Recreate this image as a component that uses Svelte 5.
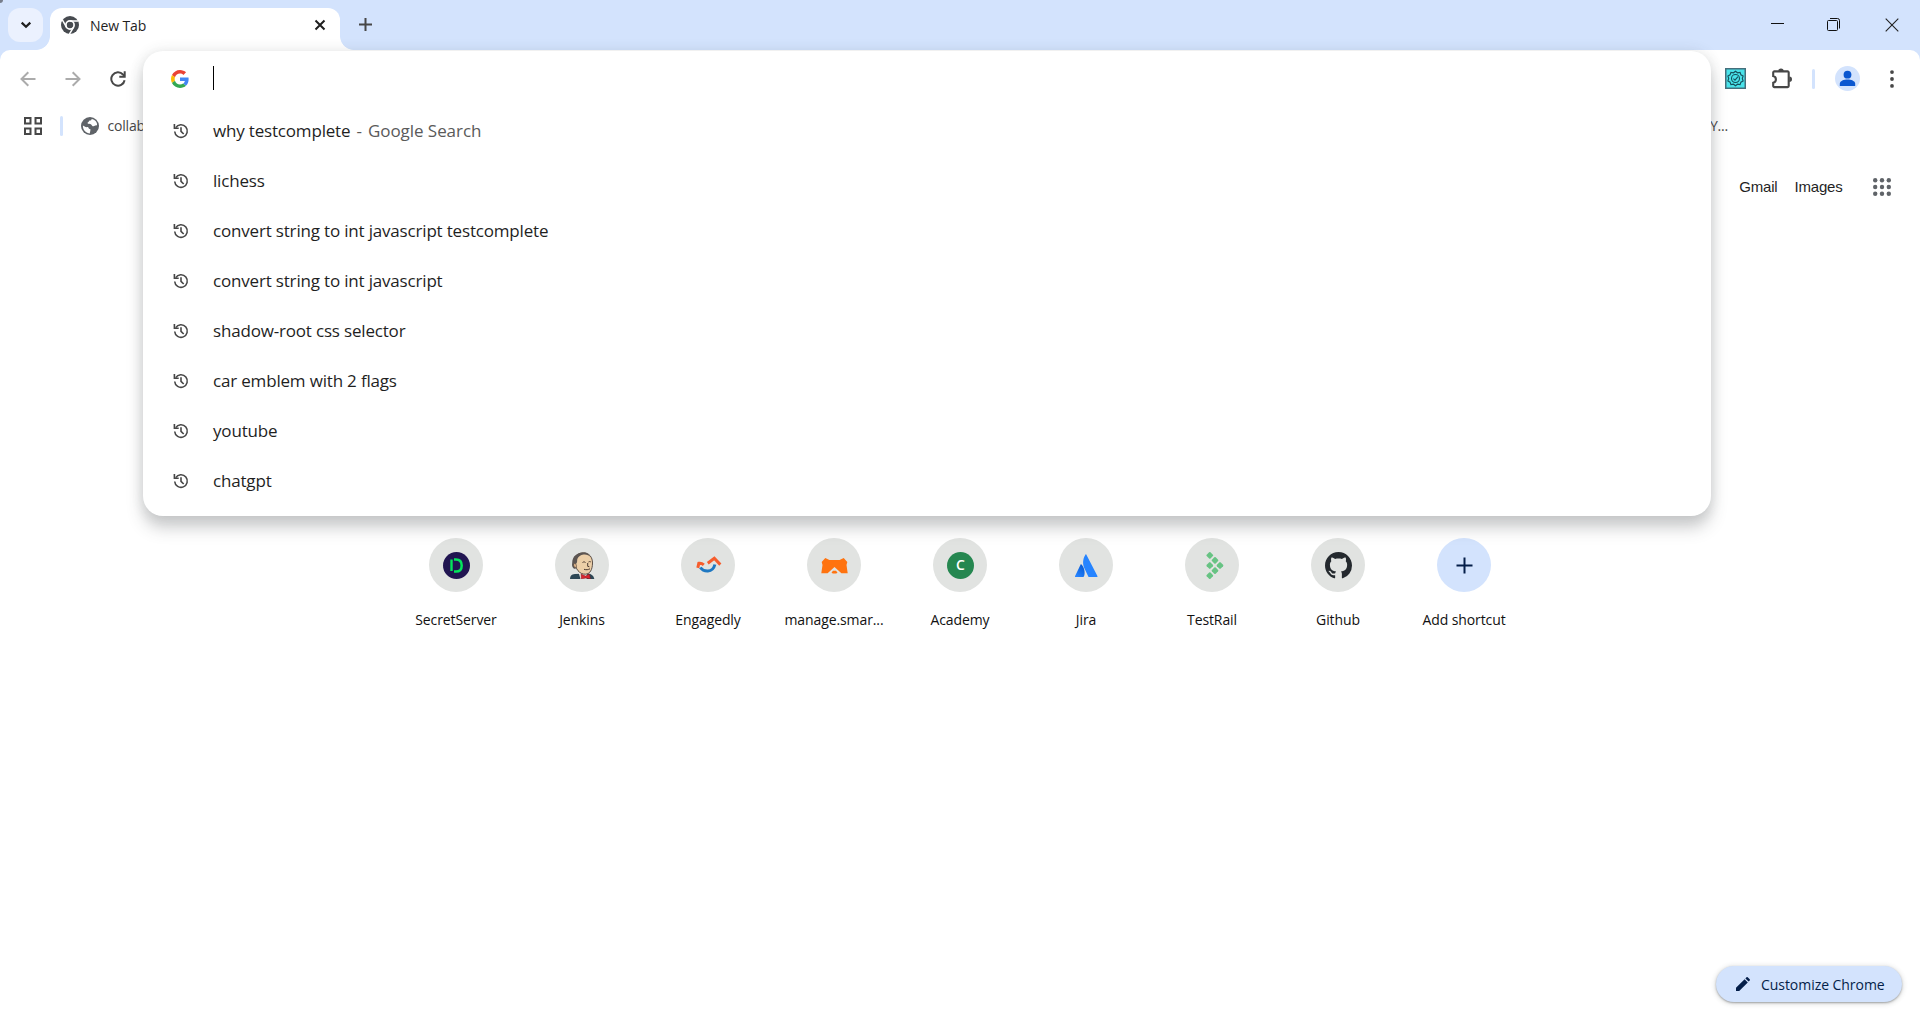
<script>
  const searches = [
    { text: 'why testcomplete', note: 'Google Search' },
    { text: 'lichess' },
    { text: 'convert string to int javascript testcomplete' },
    { text: 'convert string to int javascript' },
    { text: 'shadow-root css selector' },
    { text: 'car emblem with 2 flags' },
    { text: 'youtube' },
    { text: 'chatgpt' }
  ];

  const shortcuts = [
    { label: 'SecretServer', icon: 'secret' },
    { label: 'Jenkins', icon: 'jenkins' },
    { label: 'Engagedly', icon: 'engagedly' },
    { label: 'manage.smar...', icon: 'smartbear' },
    { label: 'Academy', icon: 'academy' },
    { label: 'Jira', icon: 'jira' },
    { label: 'TestRail', icon: 'testrail' },
    { label: 'Github', icon: 'github' },
    { label: 'Add shortcut', icon: 'add' }
  ];
</script>

<div class="browser">
  <header class="strip">
    <button class="tab-search" aria-label="Search tabs">
      <svg width="12" height="8" viewBox="0 0 12 8"><path d="M1.7 1.6 6 5.8l4.3-4.2" fill="none" stroke="#1f1f1f" stroke-width="2.2" /></svg>
    </button>
    <div class="tab">
      <svg class="chrome" width="18" height="18" viewBox="0 0 18 18">
        <circle cx="9" cy="9" r="9" fill="#474b50" />
        <circle cx="9" cy="9" r="4.1" fill="none" stroke="#fff" stroke-width="1.7" />
        <path d="M9 4.9h8.200M5.450 11.050 1.350 3.950M12.550 11.050l-4.100 7.100" fill="none" stroke="#fff" stroke-width="1.500" />
      </svg>
      <span class="tab-title">New Tab</span>
      <svg class="close" width="12" height="12" viewBox="0 0 12 12"><path d="m1.5 1.5 9 9m0-9-9 9" stroke="#1f1f1f" stroke-width="2" /></svg>
    </div>
    <svg class="new-tab" width="13" height="13" viewBox="0 0 13 13"><path d="M6.5 0v13M0 6.5h13" stroke="#474747" stroke-width="2" /></svg>
    <div class="window-controls">
      <svg width="13" height="13" viewBox="0 0 13 13"><path d="M0 5.5h13" stroke="#111" /></svg>
      <svg width="14" height="14" viewBox="0 0 14 14" fill="none" stroke="#111"><rect x=".5" y="2.500" width="10" height="10" rx="1" /><path d="M3 .5h7.500a2 2 0 0 1 2 2v8" /></svg>
      <svg width="14" height="14" viewBox="0 0 14 14"><path d="m.7.7 12.6 12.6m0-12.6L.7 13.3" stroke="#222" stroke-width="1.1" /></svg>
    </div>
  </header>

  <div class="frame">
    <div class="toolbar">
      <svg width="16" height="16" viewBox="0 0 16 16" class="nav"><path d="M15.5 8H2M8.3 1.2 1.5 8l6.8 6.8" /></svg>
      <svg width="16" height="16" viewBox="0 0 16 16" class="nav"><path d="M.5 8H14M7.7 1.2 14.5 8l-6.8 6.8" /></svg>
      <svg width="16" height="16" viewBox="0 0 16 16" class="reload"><path d="M14.6 9.2A6.7 6.7 0 1 1 13 3.5L14.6 5" /><path d="M14.700 .3v5.400H9.300" /></svg>
      <div class="actions">
        <svg class="badge" width="21" height="21" viewBox="0 0 21 21">
          <rect x=".75" y=".75" width="19.5" height="19.5" fill="#49e3ea" stroke="#456f7c" stroke-width="1.5" />
          <g fill="none" stroke="#16505c" stroke-width="1.1">
            <path d="m10.5 3.3 2 1.5 2.6-.4.8 2.4 2.2 1.3-.8 2.4.8 2.4-2.2 1.3-.8 2.4-2.6-.4-2 1.5-2-1.5-2.6.4-.8-2.4-2.2-1.3.8-2.4-.8-2.4 2.2-1.3.8-2.4 2.6.4z" />
            <circle cx="10.5" cy="10.5" r="4" />
            <path d="m8.4 10.6 1.6 1.5 3-3.4" />
          </g>
        </svg>
        <svg class="puzzle" width="22" height="21" viewBox="0 0 22 21">
          <path d="M3.400 3.400h13.200a1.100 1.100 0 0 1 1.100 1.100v13.500a1.100 1.100 0 0 1-1.100 1.100H3.400A1.100 1.100 0 0 1 2.200 18v-3.200c3.600-1 3.600-5.700 0-6.700V4.500a1.100 1.100 0 0 1 1.200-1.100z" fill="none" stroke="#474747" stroke-width="2.100" />
          <path d="M7.300 3.200a2.700 2.700 0 0 1 5.400 0zM18.300 8.600a2.700 2.700 0 0 1 0 5.400z" fill="#474747" />
        </svg>
        <i class="rule"></i>
        <svg class="avatar" width="25" height="25" viewBox="0 0 25 25"><circle cx="12.5" cy="12.5" r="12.5" fill="#d3e3fd" /><circle cx="12.5" cy="8.7" r="3.9" fill="#0b57d0" /><path d="M4.8 20v-2.2c0-2.8 4.2-4.2 7.7-4.2s7.7 1.4 7.7 4.2V20z" fill="#0b57d0" /></svg>
        <svg width="4" height="18" viewBox="0 0 4 18" fill="#474747"><circle cx="2" cy="2.1" r="1.9" /><circle cx="2" cy="9" r="1.9" /><circle cx="2" cy="15.9" r="1.9" /></svg>
      </div>
    </div>

    <div class="bookmarks">
      <svg width="18" height="18" viewBox="0 0 18 18" fill="none" stroke="#474747" stroke-width="2"><path d="M1 1h5.500v5.500H1zM11.500 1H17v5.500h-5.500zM1 11.500h5.500V17H1zM11.500 11.500H17V17h-5.500z" /></svg>
      <i class="rule"></i>
      <svg class="globe" width="18" height="18" viewBox="0 0 18 18"><circle cx="9" cy="9" r="9" fill="#5f6368" /><path d="M1.900 8.600c1.300.9 2.600 1.700 4.400 1.500 1.600-.1 1 1.900 2.500 2 1.300.1.400 1.600.4 2.500-.1 1-.6 1.300-.1 1.900C5 16.500 1.600 13 1.900 8.600zM10.500 2.100c.3 1.200-.7 1.500-1.800 1.500-.8 0-.6 1.400-1.600 1.700-.8.3-.7 1.300.2 1.500 1.300.3 2.500-.1 3.100.9.5.9.900 1.500 1.900 1.500 1.300.1 2.200-1.400 3.700-.6.600-3-1.900-6.200-5.500-6.500z" fill="#fff" /></svg>
      <span class="bookmark">collab</span>
      <span class="bookmark tail">Y...</span>
    </div>

    <nav class="links">
      <span>Gmail</span>
      <span>Images</span>
      <svg width="18" height="18" viewBox="0 0 18 18" fill="#5f6368">
        {#each [2.2, 9, 15.8] as cy}
          {#each [2.2, 9, 15.8] as cx}<circle {cx} {cy} r="2.2" />{/each}
        {/each}
      </svg>
    </nav>

    <main class="shortcuts">
      {#each shortcuts as s}
        <div class="tile">
          <div class="disc" class:add={s.icon === 'add'}>
            <svg width="27" height="27" viewBox="0 0 27 27">
              {#if s.icon === 'secret'}
                <circle cx="13.5" cy="13.5" r="13.5" fill="#211551" />
                <path d="M8.500 7.500v11.500" fill="none" stroke="#05e45c" stroke-width="2.400" />
                <path d="M11 7.400h2c3.700 0 5.700 2.400 5.700 6s-2 6.100-5.700 6.100h-2" fill="none" stroke="#05e45c" stroke-width="2.500" />
              {:else if s.icon === 'jenkins'}
                <path d="M1 27c.3-3.300 1-4.300 5-5l13-.5c3.500.5 5.800 2 6.300 5.500z" fill="#2c4654" />
                <path d="M9.500 20h9l-1 7h-6z" fill="#f4f1e8" />
                <path d="M5.500 9C5.800 3.500 9.500.7 14.500.8c5.700.1 9 4.400 9 10.200 0 6.500-2.500 11-7 11.200C10.500 22.500 6.200 17 5.500 9z" fill="#eccfa8" stroke="#4c4038" stroke-width=".9" />
                <path d="M15 .5C8 .5 3.300 4 3.200 11c-.4 2-.2 4 1.500 5.500L6.500 17l.3-4.500 1.200-2.300L8.300 7c1.200-2.700 3.200-4 6.200-4.500 3-.3 5.500.5 7 2.700C20 2 18 .6 15 .5z" fill="#5c5552" />
                <path d="M4.500 12c1.500-1 2.800 0 3 1.800l-.4 2c-1.800 0-2.700-1.700-2.600-3.800z" fill="#deb58b" stroke="#4c4038" stroke-width=".6" />
                <path d="M13.500 10.500c1-.8 2-.8 3 0M19.500 10c1-.6 1.600-.5 2.400 0M18.700 11v3.300l1.700.5M15 17.300c2.500.8 4 .4 6-.5" fill="none" stroke="#4b3a31" stroke-width="1" />
                <path d="m12 22 4.500 2 3.900-2 1 5-4.300-1-4.800 1z" fill="#d8262e" stroke="#7e2028" stroke-width=".5" />
              {:else if s.icon === 'engagedly'}
                <path d="M5.300 15.500c3.200 4.500 12.300 6 14.600-3" fill="none" stroke="#1e78c2" stroke-width="3" />
                <path d="m2.800 15.800 1-4.500c1.700-.3 3.400.1 5 1.500M12.800 11.200l6.500-4.900 6 6.300" fill="none" stroke="#f65d2d" stroke-width="3" />
              {:else if s.icon === 'smartbear'}
                <path d="m.3 21.200 1.200-8.100-.8-3.200 3.600-3.800L8.400 8h10.200l4.100-1.900 3.600 3.800-.8 3.200 1.200 8.100h-6.300l-6.900-6.200-6.900 6.200z" fill="#ff730f" />
                <path d="m10.500 20.500 1.500-1.700h3l1.500 1.700-1.200 1h-3.600z" fill="#ff730f" />
              {:else if s.icon === 'academy'}
                <circle cx="13.5" cy="13.5" r="13.5" fill="#258750" />
                <text class="initial" x="13.4" y="18" text-anchor="middle">C</text>
              {:else if s.icon === 'jira'}
                <defs><linearGradient id="peak" x1="1" y1="0" x2=".3" y2="1"><stop stop-color="#0052cc" /><stop offset="1" stop-color="#2684ff" /></linearGradient></defs>
                <path d="M8.500 12.600c-.3-.4-.8-.4-1 .1L2.100 24c-.3.600 0 1 .5 1h7.600c.3 0 .5-.1.700-.4 1.600-3.400.6-8.700-2.400-12z" fill="url(#peak)" />
                <path d="M12.400 2.700c-3 4.700-2.800 10-.8 14l3.700 7.700c.2.400.4.600.8.600h7.700c.6 0 .9-.5.6-1L13.400 2.700c-.3-.5-.7-.5-1 0z" fill="#2684ff" />
              {:else if s.icon === 'testrail'}
                <g fill="#67c383">
                  {#each [[10.8, 3.4], [16, 8.4], [10.8, 13.5], [21, 13.5], [16, 18.6], [10.8, 23.6]] as [x, y]}
                    <path transform="translate({x} {y})" d="M-.7-3.100Q0-3.700.7-3.100l2.400 2.400q.6.700 0 1.400L.7 3.100Q0 3.700-.7 3.100L-3.100.7q-.6-.7 0-1.400z" />
                  {/each}
                </g>
              {:else if s.icon === 'github'}
                <path transform="scale(1.6875)" d="M8 0C3.580 0 0 3.580 0 8c0 3.540 2.290 6.530 5.470 7.590.4.070.55-.17.55-.38 0-.19-.01-.82-.01-1.490-2.010.37-2.530-.49-2.690-.94-.09-.23-.48-.94-.82-1.130-.28-.15-.68-.52-.01-.53.63-.01 1.080.58 1.230.82.72 1.210 1.870.87 2.330.66.07-.52.28-.87.51-1.070-1.780-.2-3.640-.89-3.640-3.950 0-.87.31-1.590.82-2.150-.08-.2-.36-1.020.08-2.120 0 0 .67-.21 2.200.82.64-.18 1.320-.27 2-.27s1.360.09 2 .27c1.530-1.040 2.200-.82 2.200-.82.44 1.100.16 1.920.08 2.120.51.56.82 1.270.82 2.150 0 3.070-1.870 3.750-3.650 3.950.29.25.54.73.54 1.480 0 1.070-.01 1.930-.01 2.200 0 .21.15.46.55.38A8.010 8.010 0 0 0 16 8c0-4.420-3.580-8-8-8z" fill="#24292e" />
              {:else}
                <path d="M13.500 5.500v16M5.500 13.500h16" stroke="#041e49" stroke-width="2" />
              {/if}
            </svg>
          </div>
          <span class="label">{s.label}</span>
        </div>
      {/each}
    </main>

    <button class="customize">
      <svg width="14" height="14" viewBox="0 0 14 14" fill="#041e49"><path d="M0 14v-3.200l8.600-8.600 3.200 3.200L3.200 14zM9.400 1.400 10.500.3q.6-.5 1.200 0l2 2q.5.600 0 1.200l-1.100 1.100z" /></svg>
      <span>Customize Chrome</span>
    </button>
  </div>

  <section class="omnibox">
    <div class="query">
      <svg width="18" height="18" viewBox="0 0 48 48">
        <path fill="#EA4335" d="M24 9.500c3.540 0 6.710 1.220 9.210 3.600l6.850-6.850C35.900 2.380 30.470 0 24 0 14.620 0 6.510 5.380 2.560 13.220l7.980 6.190C12.430 13.720 17.740 9.500 24 9.500z" />
        <path fill="#4285F4" d="M46.980 24.550c0-1.570-.15-3.090-.38-4.550H24v9.020h12.940c-.58 2.960-2.260 5.480-4.780 7.180l7.730 6c4.510-4.180 7.090-10.360 7.090-17.650z" />
        <path fill="#FBBC05" d="M10.530 28.590c-.48-1.450-.76-2.990-.76-4.590s.27-3.140.76-4.590l-7.980-6.190C.92 16.460 0 20.120 0 24c0 3.880.92 7.540 2.560 10.780l7.970-6.190z" />
        <path fill="#34A853" d="M24 48c6.480 0 11.930-2.130 15.890-5.810l-7.730-6c-2.150 1.450-4.920 2.300-8.160 2.300-6.260 0-11.570-4.220-13.470-9.910l-7.980 6.190C6.510 42.620 14.620 48 24 48z" />
      </svg>
      <i class="caret"></i>
    </div>
    {#each searches as item}
      <div class="suggestion">
        <svg width="16" height="16" viewBox="0 0 16 16" fill="none" stroke="#474747" stroke-width="1.6"><path d="M1.700 8.500A6.300 6.300 0 1 0 2.700 4.600" /><path d="M1.400.9v4.300h4.300M8 4.200v4.100l2.700 2.700" /></svg>
        <span class="term">{item.text}</span>
        {#if item.note}<span class="note">- <span class="engine">{item.note}</span></span>{/if}
      </div>
    {/each}
  </section>
</div>

<style>
  :global(body) { background: #fff; overflow: hidden; }
  .browser {
    position: relative;
    display: flex;
    flex-direction: column;
    height: 1020px;
    background: #d3e3fd;
    font-family: 'Open Sans', 'Noto Sans', sans-serif;
    color: #1f1f1f;
  }
  svg { display: block; flex: none; }
  button { border: 0; padding: 0; font: inherit; color: inherit; }
  .strip {
    display: flex;
    height: 50px;
    box-sizing: border-box;
    padding: 8px 6px 0 8px;
    position: relative;
  }
  .strip::before {
    content: '';
    position: absolute;
    left: 0;
    top: 0;
    width: 3px;
    height: 3px;
    background: #777e8c;
    border-bottom-right-radius: 3px;
  }
  .tab-search {
    display: grid;
    place-items: center;
    width: 35px;
    height: 34px;
    border-radius: 12px;
    background: #ebf1fe;
  }
  .tab {
    position: relative;
    display: flex;
    align-items: center;
    width: 290px;
    height: 42px;
    box-sizing: border-box;
    margin-left: 7px;
    padding: 0 14px 8px 11px;
    border-radius: 12px 12px 0 0;
    background: #fff;
  }
  .tab::before, .tab::after {
    content: '';
    position: absolute;
    bottom: 0;
    width: 14px;
    height: 14px;
  }
  .tab::before { right: 100%; background: radial-gradient(circle at 0 0, transparent 13.5px, #fff 14.3px); }
  .tab::after { left: 100%; background: radial-gradient(circle at 100% 0, transparent 13.5px, #fff 14.3px); }
  .tab-title { margin-left: 11px; font-size: 14px; letter-spacing: -0.1px; }
  .close { margin-left: auto; }
  .new-tab { margin: 10px 0 0 19px; }
  .window-controls {
    display: flex;
    gap: 43px;
    margin: 10px 15px 0 auto;
  }
  .window-controls svg:last-child { margin-left: 1px; }
  .frame {
    flex: 1;
    display: flex;
    flex-direction: column;
    background: #fff;
    border-radius: 10px 10px 0 0;
  }
  .toolbar {
    display: flex;
    align-items: center;
    height: 57px;
    padding: 0 26px 0 20px;
    gap: 29px;
  }
  .nav { fill: none; stroke: #ababab; stroke-width: 2; }
  .reload { margin-left: -0.5px; fill: none; stroke: #474747; stroke-width: 2; }
  .actions { display: flex; align-items: center; margin-left: auto; }
  .puzzle { margin-left: 25px; }
  .avatar { margin: 0 30px 0 20.5px; }
  .rule { width: 3px; height: 20px; border-radius: 2px; background: #d3e3fd; }
  .actions .rule { margin-left: 19px; }
  .bookmarks {
    display: flex;
    align-items: center;
    height: 37px;
    padding: 0 192px 0 24px;
  }
  .bookmarks .rule { margin-left: 18px; }
  .globe { margin-left: 18px; }
  .bookmark { margin: -1px 0 0 8.5px; font-size: 14px; letter-spacing: -0.2px; color: #474747; }
  .tail { margin-left: auto; }
  .links {
    display: flex;
    justify-content: flex-end;
    align-items: center;
    height: 86px;
    padding-right: 29.5px;
    font: 15px 'Liberation Sans', Arial, sans-serif;
    letter-spacing: -0.2px;
  }
  .links span { margin-top: -2px; }
  .links span + span { margin-left: 17px; }
  .links svg { margin-left: 30px; }
  .shortcuts {
    display: flex;
    justify-content: center;
    margin-top: 308px;
  }
  .tile { width: 126px; display: flex; flex-direction: column; align-items: center; }
  .disc {
    display: grid;
    place-items: center;
    width: 54px;
    height: 54px;
    border-radius: 50%;
    background: #e1e3e1;
  }
  .disc.add { background: #d3e3fd; }
  .initial { font: 600 14px 'Open Sans', sans-serif; fill: #fff; }
  .label { margin-top: 17px; font-size: 14px; line-height: 22px; letter-spacing: -0.1px; color: #111; white-space: nowrap; }
  .customize {
    display: flex;
    align-items: center;
    align-self: flex-end;
    width: 186px;
    height: 36px;
    box-sizing: border-box;
    margin: auto 18px 18px 0;
    padding-left: 20px;
    border-radius: 18px;
    background: #d3e3fd;
    color: #041e49;
    font-size: 14px;
    letter-spacing: -0.05px;
    box-shadow: 0 1px 2px rgb(60 64 67 / 40%), 0 1px 5px 1px rgb(60 64 67 / 18%);
  }
  .customize span { margin-left: 11px; white-space: nowrap; }
  .omnibox {
    position: absolute;
    left: 143px;
    top: 51px;
    width: 1568px;
    height: 465px;
    border-radius: 20px;
    background: #fff;
    box-shadow: 0 12px 16px rgb(60 64 67 / 25%), 0 0 14px rgb(60 64 67 / 12%);
  }
  .query { display: flex; align-items: center; height: 55px; padding-left: 28px; }
  .caret { width: 1px; height: 24px; margin: -1px 0 0 24px; background: #000; }
  .suggestion {
    display: flex;
    align-items: center;
    height: 50px;
    padding-left: 29.5px;
    font-size: 17px;
    letter-spacing: -0.18px;
    white-space: nowrap;
  }
  .term { margin: -2px 0 0 24.5px; }
  .note { margin: -2px 0 0 6px; color: #5a5a5a; }
  .engine { margin-left: 2px; letter-spacing: -0.05px; }
</style>
